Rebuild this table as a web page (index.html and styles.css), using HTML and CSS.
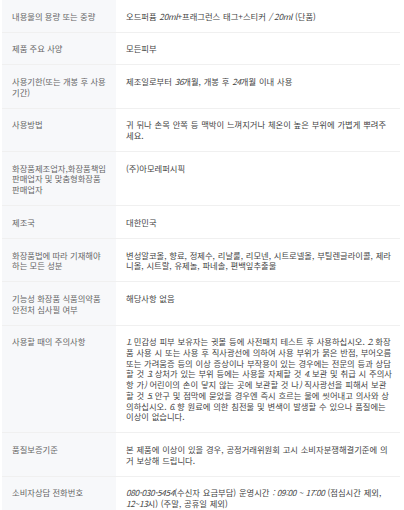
FILE: index.html
```html
<!DOCTYPE html>
<html lang="ko">
<head>
<meta charset="utf-8">
<title>상품정보 제공고시</title>
<link rel="stylesheet" href="styles.css">
</head>
<body>
<div class="wrap">
<table class="info">
<tbody>
<tr><th>내용물의 용량 또는 중량</th><td>오드퍼퓸 <span class="num">20ml</span>+프래그런스 태그+스티커 <span class="num">/ 20ml</span> (단품)</td></tr>
<tr><th>제품 주요 사양</th><td>모든피부</td></tr>
<tr><th>사용기한(또는 개봉 후 사용 기간)</th><td>제조일로부터 <span class="num">36</span>개월, 개봉 후 <span class="num">24</span>개월 이내 사용</td></tr>
<tr><th>사용방법</th><td>귀 뒤나 손목 안쪽 등 맥박이 느껴지거나 체온이 높은 부위에 가볍게 뿌려주세요.</td></tr>
<tr><th>화장품제조업자,화장품책임판매업자 및 맞춤형화장품판매업자</th><td>(주)아모레퍼시픽</td></tr>
<tr><th>제조국</th><td>대한민국</td></tr>
<tr><th>화장품법에 따라 기재해야 하는 모든 성분</th><td>변성알코올, 향료, 정제수, 리날룰, 리모넨, 시트로넬올, 부틸렌글라이콜, 제라니올, 시트랄, 유제놀, 파네솔, 편백잎추출물</td></tr>
<tr><th>기능성 화장품 식품의약품안전처 심사필 여부</th><td>해당사항 없음</td></tr>
<tr><th>사용할 때의 주의사항</th><td><span class="num mk">1.</span> 민감성 피부 보유자는 귓볼 등에 사전패치 테스트 후 사용하십시오. <span class="num mk">2.</span> 화장품 사용 시 또는 사용 후 직사광선에 의하여 사용 부위가 붉은 반점, 부어오름 또는 가려움증 등의 이상 증상이나 부작용이 있는 경우에는 전문의 등과 상담할 것 <span class="num mk">3.</span> 상처가 있는 부위 등에는 사용을 자제할 것 <span class="num mk">4.</span> 보관 및 취급 시 주의사항 가<span class="num">)</span> 어린이의 손이 닿지 않는 곳에 보관할 것 나<span class="num">)</span> 직사광선을 피해서 보관할 것 <span class="num mk">5.</span> 안구 및 점막에 묻었을 경우엔 즉시 흐르는 물에 씻어내고 의사와 상의하십시오. <span class="num mk">6.</span> 향 원료에 의한 침전물 및 변색이 발생할 수 있으나 품질에는 이상이 없습니다.</td></tr>
<tr><th>품질보증기준</th><td>본 제품에 이상이 있을 경우, 공정거래위원회 고시 소비자분쟁해결기준에 의거 보상해 드립니다.</td></tr>
<tr><th>소비자상담 전화번호</th><td><span class="num">080-030-5454</span>(수신자 요금부담) 운영시간 <span class="num">: 09:00 ~ 17:00</span> (점심시간 제외, <span class="num">12~13</span>시) (주말, 공휴일 제외)</td></tr>
</tbody>
</table>
</div>
</body>
</html>
```
FILE: styles.css
```css
html, body {
  margin: 0;
  padding: 0;
  background: #fff;
}
body {
  font-family: "Noto Sans CJK KR", "Noto Sans", sans-serif;
  font-size: 8.3px;
  line-height: 10.7px;
  color: #444;
}
.wrap {
  padding: 0 4px 0 2px;
}
.info {
  width: 100%;
  border-collapse: collapse;
  table-layout: fixed;
}
.info th,
.info td {
  padding: 10.5px 7.5px 10.5px 10px;
  text-align: left;
  vertical-align: top;
  border-bottom: 1px solid #f0f0f0;
  font-weight: normal;
}
.info th {
  width: 96px;
  padding-right: 8px;
  background: #f7f8fa;
  color: #666;
}
.info td {
  color: #444;
  word-spacing: 0.5px;
}
.num {
  font-style: italic;
  letter-spacing: -0.3px;
}
.mk {
  letter-spacing: -1px;
}
```
